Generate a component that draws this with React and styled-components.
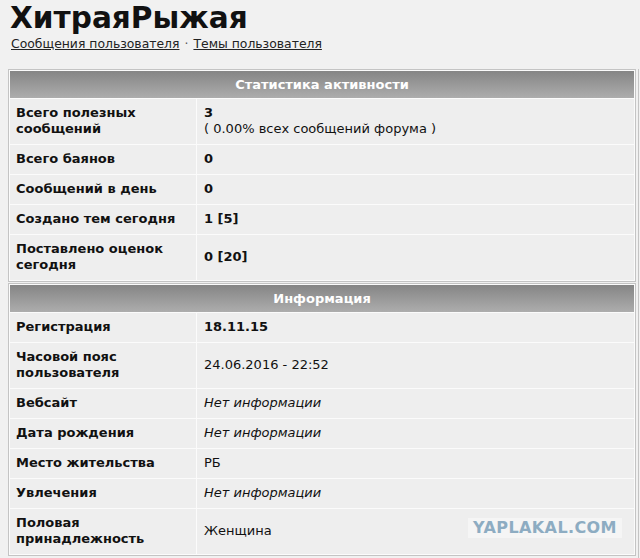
import React from "react";
import styled, { createGlobalStyle } from "styled-components";

const GlobalStyle = createGlobalStyle`
  body {
    margin: 0;
    background: #f1f1f1;
    font-family: "DejaVu Sans", Verdana, sans-serif;
    color: #111;
  }
`;

const stats = [
  { label: "Всего полезных сообщений", value: "3", note: "( 0.00% всех сообщений форума )" },
  { label: "Всего баянов", value: "0" },
  { label: "Сообщений в день", value: "0" },
  { label: "Создано тем сегодня", value: "1 [5]" },
  { label: "Поставлено оценок сегодня", value: "0 [20]" },
];

const info = [
  { label: "Регистрация", value: "18.11.15", kind: "bold" },
  { label: "Часовой пояс пользователя", value: "24.06.2016 - 22:52" },
  { label: "Вебсайт", value: "Нет информации", kind: "italic" },
  { label: "Дата рождения", value: "Нет информации", kind: "italic" },
  { label: "Место жительства", value: "РБ" },
  { label: "Увлечения", value: "Нет информации", kind: "italic" },
  { label: "Половая принадлежность", value: "Женщина" },
];

const Section = ({ title, rows }) => (
  <Table>
    <tbody>
      <tr>
        <Head colSpan={2}>{title}</Head>
      </tr>
      {rows.map((r) => (
        <tr key={r.label}>
          <Label>{r.label}</Label>
          <Value $kind={r.kind || "bold"}>
            {r.value}
            {r.note && <Note>{r.note}</Note>}
          </Value>
        </tr>
      ))}
    </tbody>
  </Table>
);

const App = () => {
  const infoRows = info.map((r) => ({ ...r, kind: r.kind || "normal" }));
  return (
    <Page>
      <GlobalStyle />
      <Main>
        <Title>ХитраяРыжая</Title>
        <Links>
          <Link href="#">Сообщения пользователя</Link>
          <Dot>·</Dot>
          <Link href="#">Темы пользователя</Link>
        </Links>
        <Section title="Статистика активности" rows={stats} />
        <Section title="Информация" rows={infoRows} />
        <NextTable />
      </Main>
      <Aside />
      <Watermark>YAPLAKAL.COM</Watermark>
    </Page>
  );
};

const Page = styled.div`
  position: relative;
  display: flex;
  padding: 2px 0 0 8px;
  height: 556px;
  overflow: hidden;
`;

const Main = styled.main`
  flex: none;
  width: 628px;
`;

const Aside = styled.aside`
  flex: 1;
  margin: 67px 0 0 2px;
  border-left: 1px solid #c4c4c4;
`;

const Title = styled.h1`
  margin: 0 0 0 2px;
  font-size: 29.6px;
  line-height: 33px;
  font-weight: bold;
  color: #111;
`;

const Links = styled.div`
  margin: 2px 0 0 3px;
  font-size: 12.4px;
  line-height: 14px;
  color: #555;
`;

const Link = styled.a`
  color: #222;
  text-decoration: underline;
`;

const Dot = styled.span`
  margin: 0 5px;
`;

const Table = styled.table`
  width: 100%;
  margin-top: 1px;
  border: 1px solid #c4c4c4;
  border-spacing: 1px;
  background: #fbfbfb;
  font-size: 13px;
  line-height: 16px;

  &:first-of-type {
    margin-top: 18px;
  }
`;

const Head = styled.th`
  height: 27px;
  padding: 0;
  background: linear-gradient(#858585, #adadad);
  color: #fff;
  font-weight: bold;
  text-align: center;
`;

const Label = styled.td`
  width: 174px;
  padding: 6px 6px 7px;
  background: #eeeeee;
  font-weight: bold;
  color: #111;
`;

const Value = styled.td`
  padding: 6px 7px 7px;
  background: #eeeeee;
  color: #111;
  font-weight: ${(p) => (p.$kind === "bold" ? "bold" : "normal")};
  font-style: ${(p) => (p.$kind === "italic" ? "italic" : "normal")};
`;

const Note = styled.div`
  font-weight: normal;
`;

const NextTable = styled.div`
  margin-top: 2px;
  height: 20px;
  border: 1px solid #c4c4c4;
  background: #eeeeee;
`;

const Watermark = styled.div`
  position: absolute;
  left: 468px;
  top: 518px;
  width: 154px;
  height: 20px;
  background: #f5f5f5;
  color: #8dacc2;
  font-family: "DejaVu Sans", sans-serif;
  font-weight: bold;
  font-size: 16px;
  line-height: 20px;
  text-align: center;
  letter-spacing: 0.4px;
`;

export default App;
